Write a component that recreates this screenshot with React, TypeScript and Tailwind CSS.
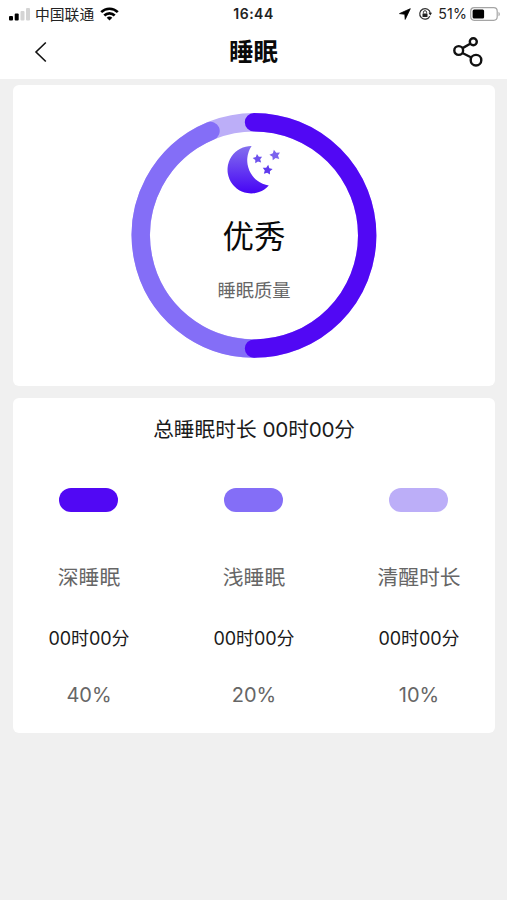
const stages = [
  { label: '深睡眠', time: '00时00分', percent: '40%', color: 'bg-[#5108f4]' },
  { label: '浅睡眠', time: '00时00分', percent: '20%', color: 'bg-[#846ef7]' },
  { label: '清醒时长', time: '00时00分', percent: '10%', color: 'bg-[#bcaef8]' },
];

const STAR = 'M0 -5 L1.6 -1.9 5 -1.4 2.6 1 3.1 4.4 0 2.9 -3.1 4.4 -2.6 1 -5 -1.4 -1.6 -1.9Z';

function StatusBar() {
  return (
    <div className="grid h-7 grid-cols-3 items-center text-[14px] leading-7 text-[#222]">
      <div className="flex items-center pl-[9px]">
        <svg width="22" height="13" viewBox="0 0 22 13">
          <rect x="0" y="8" width="4" height="4.5" rx="1" fill="#000" />
          <rect x="5.7" y="5.5" width="4" height="7" rx="1" fill="#000" />
          <rect x="11.5" y="3" width="4" height="9.5" rx="1" fill="#d4d4d4" />
          <rect x="17" y="0" width="4" height="12.5" rx="1" fill="#d4d4d4" />
        </svg>
        <span className="ml-1 whitespace-nowrap pt-[2px] text-[14.8px] leading-[26px]">中国联通</span>
        <svg className="ml-[6px]" width="19" height="14" viewBox="0 0 19 14" fill="none" stroke="#000" strokeWidth="2.6">
          <path d="M1.2 5.2C5.8 .6 13.2 .6 17.8 5.2" />
          <path d="M4.3 8.5C7.2 5.6 11.8 5.6 14.7 8.5" />
          <path d="M9.5 13.6L6.7 10.7C8.3 9.2 10.7 9.2 12.3 10.7Z" fill="#000" stroke="none" />
        </svg>
      </div>
      <div className="text-center text-[14px] font-semibold tracking-[0.5px]">16:44</div>
      <div className="flex items-center justify-end pr-[6px]">
        <svg width="12" height="12" viewBox="0 0 12 12">
          <path d="M11.3 .7L.5 5.6 5.8 6.3 6.2 11.4Z" fill="#000" stroke="#000" strokeWidth=".8" strokeLinejoin="round" />
        </svg>
        <svg className="ml-[7px]" width="14" height="14" viewBox="0 0 14 14" fill="none" stroke="#333">
          <path d="M11.8 9.2A5.3 5.3 0 1 1 12.3 6.3" strokeWidth="1.2" />
          <path d="M10.5 5.8H14L12.3 8.4Z" fill="#222" stroke="none" />
          <rect x="4.5" y="6.4" width="5" height="3.7" rx=".5" fill="#222" stroke="none" />
          <path d="M5.4 6.5V5.3A1.6 1.6 0 0 1 8.6 5.3V6.5" />
        </svg>
        <span className="ml-[6px] text-[14.2px] tracking-[0.1px]">51%</span>
        <svg className="ml-[3px]" width="31" height="14" viewBox="0 0 31 14">
          <rect x=".7" y=".7" width="26.5" height="12.6" rx="3.5" fill="none" stroke="#a5a5a5" strokeWidth="1.2" />
          <rect x="2.6" y="2.5" width="11.5" height="9" rx="1.5" fill="#000" />
          <path d="M28.5 4.7C30.3 5.5 30.3 8.5 28.5 9.3Z" fill="#a5a5a5" />
        </svg>
      </div>
    </div>
  );
}

function NavBar() {
  return (
    <div className="grid h-[51px] grid-cols-3 items-center">
      <svg className="ml-[34px] mb-[4px]" width="14" height="22" viewBox="0 0 14 22" fill="none" stroke="#111" strokeWidth="1.6">
        <path d="M11.8 1.5L2 11 11.8 20.5" />
      </svg>
      <h1 className="pb-[2px] text-center text-[24.5px] font-bold leading-none text-[#0a0a0a]">睡眠</h1>
      <svg className="mr-[22px] mb-[5px] justify-self-end" width="32" height="32" viewBox="0 0 32 32" fill="none" stroke="#111" strokeWidth="2.4">
        <circle cx="20.3" cy="6.7" r="3.5" />
        <circle cx="5.7" cy="15.5" r="4.4" />
        <circle cx="23" cy="25.2" r="5.3" />
        <path d="M9.6 13.1L17.2 8.7M9.4 18L18.4 22.5" />
      </svg>
    </div>
  );
}

function QualityRing() {
  return (
    <div className="relative h-[246px] w-[246px]">
      <svg width="246" height="246" viewBox="0 0 246 246" fill="none" strokeWidth="18.4" strokeLinecap="round">
        <defs>
          <linearGradient id="moon" x1="0" y1="0" x2="0" y2="1">
            <stop offset="0" stopColor="#8470ee" />
            <stop offset="1" stopColor="#4604f5" />
          </linearGradient>
        </defs>
        <circle cx="123" cy="123.4" r="113.2" stroke="#bcaef8" />
        <path d="M123 236.6A113.2 113.2 0 0 1 79.5 18.9" stroke="#846ef7" />
        <path d="M123 10.2A113.2 113.2 0 0 1 123 236.6" stroke="#5108f4" />
        <g stroke="none">
          <path d="M120.6 34A23.7 23.7 0 1 0 137.8 73.6A25.6 25.6 0 0 1 120.6 34Z" fill="url(#moon)" />
          <path d={STAR} transform="translate(126.6 46.7) rotate(-8) scale(.95)" fill="#6d50ed" />
          <path d={STAR} transform="translate(144 43) rotate(-12) scale(1.08)" fill="#7c64ee" />
          <path d={STAR} transform="translate(136.5 57.8) rotate(8)" fill="#5f3aee" />
        </g>
      </svg>
      <div className="absolute inset-0 flex flex-col items-center pt-[105px]">
        <div className="text-[31.5px] leading-[40px] text-[#0a0a0a]">优秀</div>
        <div className="mt-[21px] text-[18.3px] leading-[24px] text-[#666]">睡眠质量</div>
      </div>
    </div>
  );
}

export default function App() {
  return (
    <div className="min-h-[900px] w-full bg-[#f0f0f0] font-[Inter,'Noto_Sans_CJK_SC',sans-serif]">
      <header className="bg-white">
        <StatusBar />
        <NavBar />
      </header>

      <main className="flex flex-col gap-3 pl-[13px] pr-3 pt-[6px]">
        <section className="flex h-[301px] justify-center rounded-md bg-white pt-[27px]">
          <QualityRing />
        </section>

        <section className="h-[335px] rounded-md bg-white pt-[18px]">
          <h2 className="text-center text-[20.7px] leading-[28px] text-[#1a1a1a]">
            总睡眠时长 <span className="tracking-[-0.2px]">00时00分</span>
          </h2>
          <div className="mt-[44px] grid grid-cols-[152px_178px_152px]">
            {stages.map((s) => (
              <div key={s.label} className="flex flex-col items-center">
                <div className={`-ml-px h-6 w-[59px] rounded-full ${s.color}`} />
                <div className="mt-[52px] text-[20.8px] leading-[28px] text-[#666]">{s.label}</div>
                <div className="mt-[35px] text-[18px] leading-[24px] tracking-[-0.1px] text-[#1a1a1a]">{s.time}</div>
                <div className="mt-[30px] text-[20px] leading-[28px] text-[#666]">{s.percent}</div>
              </div>
            ))}
          </div>
        </section>
      </main>
    </div>
  );
}
